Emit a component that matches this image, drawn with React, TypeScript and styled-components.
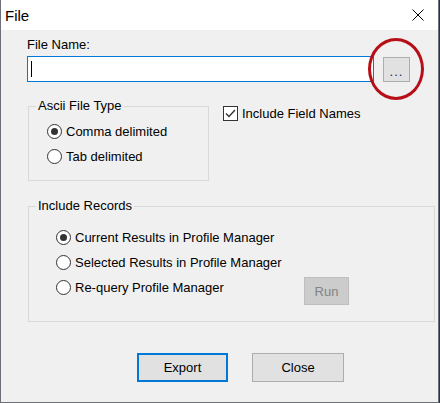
import React from 'react'
import styled, { createGlobalStyle } from 'styled-components'

const GlobalStyle = createGlobalStyle`
	html, body {
		margin: 0;
		padding: 0;
		background: #2b3150;
	}
	body {
		font-family: 'Liberation Sans', Arial, sans-serif;
		font-size: 13px;
		color: #000;
	}
`

const Window = styled.div`
	box-sizing: border-box;
	width: 439px;
	height: 403px;
	background: #f0f0f0;
	border: 1px solid #6e7079;
	border-top: none;
	display: flex;
	flex-direction: column;
`

const TitleBar = styled.div`
	height: 30px;
	flex-shrink: 0;
	background: #fff;
	display: flex;
	align-items: center;
	justify-content: space-between;
	padding: 0 14px 0 4px;
	font-size: 15px;
`

const Body = styled.div`
	padding: 7px 0 0 26px;
	display: flex;
	flex-direction: column;
`

const FieldLabel = styled.div`
	line-height: 15px;
	height: 15px;
`

const NameRow = styled.div`
	display: flex;
	align-items: flex-start;
	gap: 9px;
	margin-top: 4px;
`

const TextBox = styled.div`
	box-sizing: border-box;
	width: 347px;
	height: 26px;
	background: #fff;
	border: 1px solid #0078d7;
	display: flex;
	align-items: center;
	padding-left: 3px;
`

const Caret = styled.span`
	width: 1px;
	height: 16px;
	background: #000;
`

const Button = styled.button<{ $default?: boolean; $disabled?: boolean; $w: number; $h: number }>`
	box-sizing: border-box;
	width: ${p => p.$w}px;
	height: ${p => p.$h}px;
	font-family: inherit;
	font-size: 13px;
	padding: 0;
	background: ${p => (p.$disabled ? '#cccccc' : '#e1e1e1')};
	color: ${p => (p.$disabled ? '#838383' : '#000')};
	border: ${p => (p.$default ? '2px solid #0078d7' : p.$disabled ? '1px solid #bfbfbf' : '1px solid #adadad')};
	flex-shrink: 0;
`

const BrowseWrap = styled.div`
	position: relative;
	margin-top: 1px;
`

const Highlight = styled.span`
	position: absolute;
	left: -15px;
	top: -19px;
	width: 56px;
	height: 62px;
	box-sizing: border-box;
	border: 3px solid #b70f17;
	border-radius: 50%;
	pointer-events: none;
`

const Dots = styled.span`
	display: block;
	color: #1f2357;
	letter-spacing: 1px;
	padding-top: 4px;
`

const OptionsRow = styled.div`
	display: flex;
	align-items: flex-start;
	margin-top: 17px;
`

const Group = styled.fieldset<{ $w: number; $gap?: number }>`
	box-sizing: border-box;
	width: ${p => p.$w}px;
	margin: ${p => p.$gap ?? 0}px 0 0 1px;
	padding: 0 0 0 7px;
	border: 1px solid #d9d9d9;
	min-width: 0;
`

const Caption = styled.legend`
	padding: 0 2px;
	line-height: 14px;
	font-size: 13px;
`

const RadioList = styled.div<{ $indent: number; $top: number; $bottom: number }>`
	display: flex;
	flex-direction: column;
	padding: ${p => p.$top}px 0 ${p => p.$bottom}px ${p => p.$indent}px;
`

const Row = styled.div`
	display: flex;
	align-items: flex-start;
`

const OptionLine = styled.label<{ $w?: number }>`
	display: flex;
	align-items: center;
	gap: 4px;
	height: 25px;
	${p => (p.$w ? `width: ${p.$w}px;` : '')}
`

const RadioCircle = styled.span<{ $on?: boolean }>`
	box-sizing: border-box;
	width: 15px;
	height: 15px;
	border-radius: 50%;
	border: 1px solid #333;
	background: #fff;
	display: flex;
	align-items: center;
	justify-content: center;
	flex-shrink: 0;
	&::after {
		content: '';
		width: 7px;
		height: 7px;
		border-radius: 50%;
		background: ${p => (p.$on ? '#333' : 'transparent')};
	}
`

const CheckLine = styled.label`
	display: flex;
	align-items: center;
	gap: 4px;
	margin: 6px 0 0 14px;
	height: 16px;
`

const CheckBox = styled.span`
	box-sizing: border-box;
	width: 15px;
	height: 15px;
	border: 1px solid #333;
	background: #fff;
	display: flex;
	align-items: center;
	justify-content: center;
`

const Footer = styled.div`
	display: flex;
	gap: 24px;
	padding-left: 110px;
	margin-top: 31px;
`

function Radio(props: { label: string; on?: boolean; width?: number }) {
	return (
		<OptionLine $w={props.width}>
			<RadioCircle $on={props.on} />
			<span>{props.label}</span>
		</OptionLine>
	)
}

export default function App() {
	return (
		<>
			<GlobalStyle />
			<Window>
				<TitleBar>
					<span>File</span>
					<svg width="12" height="12" viewBox="0 0 12 12">
						<path d="M0.5 0.5 L11.5 11.5 M11.5 0.5 L0.5 11.5" stroke="#000" strokeWidth="1" />
					</svg>
				</TitleBar>
				<Body>
					<FieldLabel>File Name:</FieldLabel>
					<NameRow>
						<TextBox><Caret /></TextBox>
						<BrowseWrap>
							<Button $w={27} $h={25}><Dots>...</Dots></Button>
							<Highlight />
						</BrowseWrap>
					</NameRow>
					<OptionsRow>
						<Group $w={181}>
							<Caption>Ascii File Type</Caption>
							<RadioList $indent={11} $top={6} $bottom={11}>
								<Radio label="Comma delimited" on />
								<Radio label="Tab delimited" />
							</RadioList>
						</Group>
						<CheckLine>
							<CheckBox>
								<svg width="11" height="9" viewBox="0 0 11 9">
									<path d="M1 4.5 L4 7.5 L10 1" fill="none" stroke="#333" strokeWidth="1.4" />
								</svg>
							</CheckBox>
							<span>Include Field Names</span>
						</CheckLine>
					</OptionsRow>
					<Group $w={407} $gap={18}>
						<Caption>Include Records</Caption>
						<RadioList $indent={20} $top={12} $bottom={16}>
							<Radio label="Current Results in Profile Manager" on />
							<Radio label="Selected Results in Profile Manager" />
							<Row>
								<Radio label="Re-query Profile Manager" width={248} />
								<Button $w={45} $h={28} $disabled style={{ marginTop: 2 }}>Run</Button>
							</Row>
						</RadioList>
					</Group>
					<Footer>
						<Button $w={91} $h={29} $default>Export</Button>
						<Button $w={92} $h={29}>Close</Button>
					</Footer>
				</Body>
			</Window>
		</>
	)
}
